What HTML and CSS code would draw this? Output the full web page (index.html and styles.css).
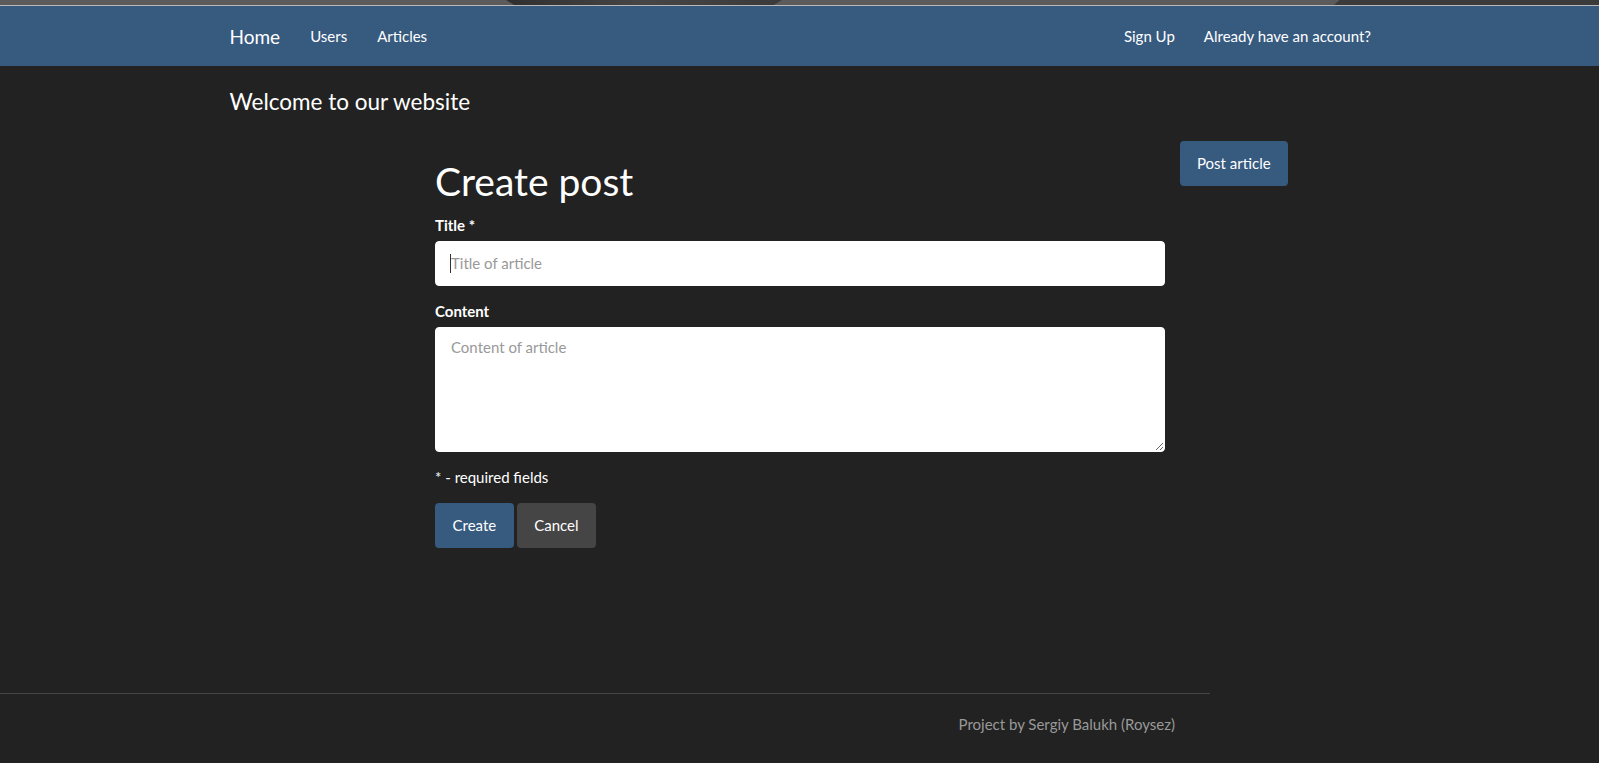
FILE: index.html
```html
<!DOCTYPE html>
<html lang="en">
<head>
<meta charset="utf-8">
<title>Create post</title>
<link rel="stylesheet" href="styles.css">
</head>
<body>
<div class="chrome">
  <div class="chrome-tab tab-a"></div>
  <div class="chrome-tab tab-b"></div>
</div>
<nav class="navbar">
  <div class="container nav-inner">
    <div class="nav-left">
      <a class="brand" href="#">Home</a>
      <a class="nav-link" href="#">Users</a>
      <a class="nav-link" href="#">Articles</a>
    </div>
    <div class="nav-right">
      <a class="nav-link" href="#">Sign Up</a>
      <a class="nav-link" href="#">Already have an account?</a>
    </div>
  </div>
</nav>
<main class="page">
  <div class="container">
    <h3 class="welcome">Welcome to our website</h3>
    <div class="post-row">
      <form class="post-form">
        <h1 class="form-title">Create post</h1>
        <div class="form-group">
          <label class="form-label" for="title">Title *</label>
          <div class="field-wrap">
            <input class="form-control" id="title" type="text" placeholder="Title of article">
            <span class="caret"></span>
          </div>
        </div>
        <div class="form-group">
          <label class="form-label" for="content">Content</label>
          <textarea class="form-control form-textarea" id="content" placeholder="Content of article"></textarea>
        </div>
        <p class="hint">* - required fields</p>
        <div class="actions">
          <button class="btn btn-primary" type="button">Create</button>
          <button class="btn btn-default" type="button">Cancel</button>
        </div>
      </form>
      <a class="btn btn-primary" href="#">Post article</a>
    </div>
  </div>
</main>
<footer class="footer">
  <p class="footer-text">Project by Sergiy Balukh (Roysez)</p>
</footer>
</body>
</html>
```

FILE: styles.css
```css
* {
  box-sizing: border-box;
}

html, body {
  margin: 0;
  padding: 0;
}

body {
  background: #222222;
  color: #ffffff;
  font-family: "Lato", "Open Sans", sans-serif;
  font-size: 15px;
  line-height: 21px;
  min-height: 100vh;
  display: flex;
  flex-direction: column;
}

a {
  color: #ffffff;
  text-decoration: none;
}

.container {
  width: 1140px;
  margin: 0 auto;
}

/* browser chrome fragment at the very top */
.chrome {
  height: 6px;
  background: #5b5b5b;
  border-bottom: 1px solid #b8b8b8;
  display: flex;
}

.chrome-tab {
  height: 5px;
  background: linear-gradient(90deg, #2f2f2f, #464646 50%, #3a3a3a);
}

.tab-a {
  margin-left: 506px;
  width: 276px;
  clip-path: polygon(0 0, 100% 0, 97% 100%, 3% 100%);
}

.tab-b {
  margin-left: auto;
  width: 265px;
  background: #3b3b3b;
  clip-path: polygon(2% 0, 100% 0, 100% 100%, 0 100%);
}

/* navbar */
.navbar {
  height: 60px;
  background: #375a7f;
}

.nav-inner {
  height: 100%;
  display: flex;
  align-items: center;
  justify-content: space-between;
}

.nav-left,
.nav-right {
  display: flex;
  align-items: center;
}

.nav-left {
  margin-left: -15px;
}

.nav-right {
  margin-right: -16px;
}

.brand {
  font-size: 19px;
  line-height: 21px;
  padding: 0 15px;
}

.nav-link {
  font-size: 15px;
  padding: 0 15px;
}

.nav-right .nav-link {
  padding: 0 14.5px;
}

/* page */
.page {
  flex: 1;
}

.welcome {
  margin: 21px 0 0;
  font-size: 22.5px;
  line-height: 30px;
  font-weight: 400;
}

.post-row {
  display: flex;
  align-items: flex-start;
  gap: 15px;
  margin-top: 24px;
  padding-left: 205.5px;
}

.post-form {
  width: 730px;
  margin: 0;
}

.form-title {
  margin: 19px 0 12px;
  font-size: 39px;
  line-height: 43px;
  font-weight: 400;
}

.form-group {
  margin-bottom: 15px;
}

.form-label {
  display: block;
  font-weight: 700;
  margin-bottom: 5px;
}

.field-wrap {
  position: relative;
}

.caret {
  position: absolute;
  left: 15px;
  top: 13px;
  width: 1px;
  height: 19px;
  background: #333333;
}

.form-control {
  display: block;
  width: 100%;
  height: 45px;
  padding: 9px 15px 11px;
  border: 1px solid #ffffff;
  border-radius: 4px;
  background: #ffffff;
  color: #464545;
  font-family: "Lato", "Open Sans", sans-serif;
  font-size: 15px;
  line-height: 21px;
  outline: none;
}

.form-control::placeholder {
  color: #999999;
}

.form-textarea {
  height: 125px;
  resize: vertical;
}

.hint {
  margin: 0 0 15px;
}

.actions {
  display: flex;
  gap: 3px;
}

.btn {
  display: inline-block;
  padding: 10px 15px;
  border: 2px solid transparent;
  border-radius: 4px;
  font-family: "Lato", "Open Sans", sans-serif;
  font-size: 15px;
  line-height: 21px;
  color: #ffffff;
  cursor: pointer;
  white-space: nowrap;
}

.actions .btn {
  padding: 10px 15.5px;
}

.btn-primary {
  background: #375a7f;
  border-color: #375a7f;
}

.btn-default {
  background: #464545;
  border-color: #464545;
}

/* footer */
.footer {
  width: 1210px;
  height: 70px;
  border-top: 1px solid #464545;
  padding: 20px 35px 0 0;
}

.footer-text {
  margin: 0;
  text-align: right;
  color: #999999;
}
```
